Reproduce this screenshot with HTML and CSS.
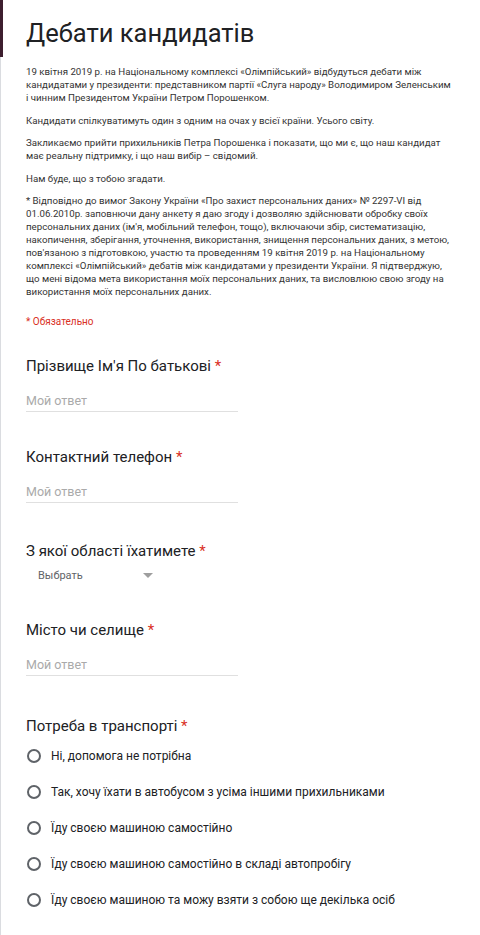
FILE: index.html
```html
<!DOCTYPE html>
<html lang="uk">
<head>
<meta charset="utf-8">
<title>Дебати кандидатів</title>
<link rel="stylesheet" href="styles.css">
</head>
<body>
<div class="card">
  <div class="head">
    <h1 class="title">Дебати кандидатів</h1>
  </div>
  <div class="body">
    <div class="desc">
      <p>19 квітня 2019 р. на Національному комплексі «Олімпійський» відбудуться дебати між кандидатами у президенти: представником партії «Слуга народу» Володимиром Зеленським і&nbsp;чинним Президентом України Петром Порошенком.</p>
      <p>Кандидати спілкуватимуть один з одним на очах у всієї країни. Усього світу.</p>
      <p>Закликаємо прийти прихильників Петра Порошенка і показати, що ми є, що наш кандидат має реальну підтримку, і що наш вибір – свідомий.</p>
      <p>Нам буде, що з тобою згадати.</p>
      <p>* Відповідно до вимог Закону України «Про захист персональних даних» № 2297-VI від 01.06.2010р. заповнючи дану анкету я даю згоду і дозволяю здійснювати обробку своїх персональних даних (ім'я, мобільний телефон, тощо), включаючи збір, систематизацію, накопичення, зберігання, уточнення, використання, знищення персональних даних, з метою, пов'язаною з підготовкою, участю та проведенням 19 квітня 2019 р. на Національному комплексі «Олімпійський» дебатів між кандидатами у президенти України. Я підтверджую, що мені відома мета використання моїх персональних даних, та висловлюю свою згоду на використання моїх персональних даних.</p>
    </div>
    <div class="required-note">* Обязательно</div>

    <div class="question">
      <div class="q-title">Прізвище Ім'я По батькові <span class="star">*</span></div>
      <div class="text-input">Мой ответ</div>
    </div>

    <div class="question">
      <div class="q-title">Контактний телефон <span class="star">*</span></div>
      <div class="text-input">Мой ответ</div>
    </div>

    <div class="question q-select">
      <div class="q-title">З якої області їхатимете <span class="star">*</span></div>
      <div class="select">
        <span class="select-label">Выбрать</span>
        <svg class="select-arrow" width="10" height="5" viewBox="0 0 10 5"><path d="M0 0h10L5 5z" fill="#9e9e9e"/></svg>
      </div>
    </div>

    <div class="question">
      <div class="q-title">Місто чи селище <span class="star">*</span></div>
      <div class="text-input">Мой ответ</div>
    </div>

    <div class="question q-radio">
      <div class="q-title">Потреба в транспорті <span class="star">*</span></div>
      <div class="options">
        <div class="option"><span class="radio"></span><span class="opt-label">Ні, допомога не потрібна</span></div>
        <div class="option"><span class="radio"></span><span class="opt-label">Так, хочу їхати в автобусом з усіма іншими прихильниками</span></div>
        <div class="option"><span class="radio"></span><span class="opt-label">Їду своєю машиною самостійно</span></div>
        <div class="option"><span class="radio"></span><span class="opt-label">Їду своєю машиною самостійно в складі автопробігу</span></div>
        <div class="option"><span class="radio"></span><span class="opt-label">Їду своєю машиною та можу взяти з собою ще декілька осіб</span></div>
      </div>
    </div>
  </div>
</div>
</body>
</html>
```

FILE: styles.css
```css
html, body {
  margin: 0;
  padding: 0;
  background: #ffffff;
}
body {
  font-family: Roboto, "Noto Sans", "Liberation Sans", sans-serif;
  color: #202124;
  width: 480px;
  height: 935px;
  overflow: hidden;
}
.card {
  min-height: 935px;
  border-left: 1px solid #dadce0;
}
.head {
  height: 57px;
  box-sizing: border-box;
  margin-left: -1px;
  border-left: 3px solid #3d1e2e;
  padding: 15px 0 0 23px;
}
.title {
  margin: 0;
  font-size: 25.5px;
  line-height: 36px;
  font-weight: 400;
  color: #202124;
}
.body {
  padding: 8px 24px 0 25px;
}
.desc {
  font-size: 9.7px;
  line-height: 13px;
  color: #333333;
}
.desc p {
  margin: 0 0 9.5px 0;
}
.required-note {
  margin-top: 17px;
  font-size: 10px;
  line-height: 13px;
  color: #d93025;
}
.question {
  margin-top: 35px;
}
.required-note + .question {
  margin-top: 28px;
}
.question.q-select {
  margin-top: 38px;
}
.question.q-radio {
  margin-top: 40px;
}
.q-title {
  font-size: 15px;
  line-height: 20px;
  color: #202124;
}
.star {
  color: #d93025;
}
.text-input {
  margin-top: 17px;
  width: 212px;
  font-size: 12.5px;
  line-height: 16px;
  color: #aaaaaa;
  padding-bottom: 2px;
  border-bottom: 1px solid #e0e0e0;
}
.q-select .q-title {
  margin-bottom: 4px;
}
.select {
  display: flex;
  align-items: center;
  width: 140px;
  height: 20px;
  padding-left: 12px;
  box-sizing: border-box;
}
.select-label {
  font-size: 11px;
  color: #5f6368;
  flex: 1;
}
.select-arrow {
  margin-right: 13px;
}
.options {
  margin-top: 10px;
  display: flex;
  flex-direction: column;
  gap: 16px;
}
.option {
  display: flex;
  align-items: center;
  height: 20px;
}
.radio {
  width: 10px;
  height: 10px;
  border: 2px solid #5f6368;
  border-radius: 50%;
  margin: 0 10px 0 1px;
  flex: none;
}
.opt-label {
  font-size: 12px;
  color: #202124;
}
```
